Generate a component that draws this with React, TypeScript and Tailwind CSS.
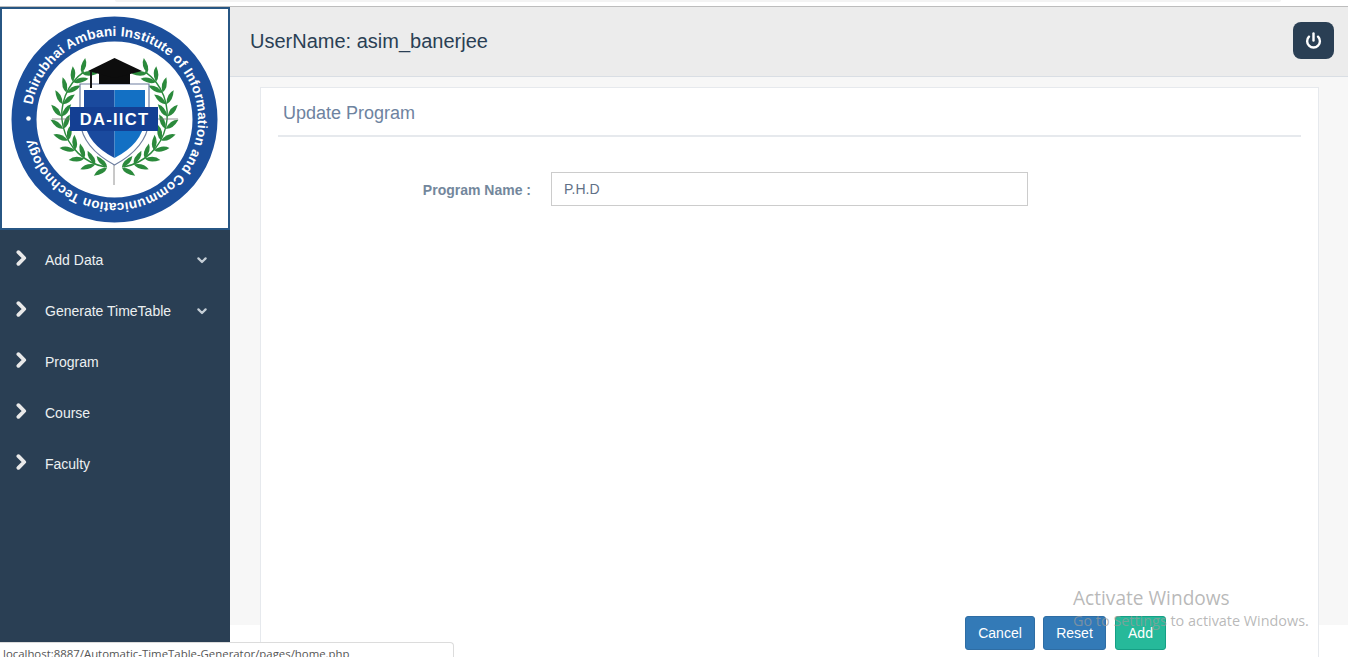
import { Power } from "lucide-react";

const menu = [
  { label: "Add Data", caret: true },
  { label: "Generate TimeTable", caret: true },
  { label: "Program", caret: false },
  { label: "Course", caret: false },
  { label: "Faculty", caret: false },
];

// leaf pairs on one side of the wreath, from the bottom up to the cap
const leaves = Array.from({ length: 11 }, (_, i) => {
  const deg = 82 - i * 13.4;
  const rad = deg * (Math.PI / 180);
  return { x: 53 * Math.cos(rad), y: 53 * Math.sin(rad), rot: deg - 90 };
});

function Branch() {
  return (
    <g>
      <path d="M9 52 A53 53 0 0 0 30.4 -43.4" fill="none" stroke="#2b8a3c" strokeWidth="1.4" />
      {leaves.map((l, i) => (
        <g key={i} transform={`translate(${l.x} ${l.y}) rotate(${l.rot})`} fill="#2b8a3c">
          <path d="M0 0 Q1 -7 12 -10 Q10 -2 0 0 Z" />
          <path d="M0 0 Q1 7 12 10 Q10 2 0 0 Z" />
        </g>
      ))}
    </g>
  );
}

function Logo() {
  return (
    <svg viewBox="0 0 226 219" className="block h-[219px] w-[226px]">
      <g transform="translate(-2 -9)">
        <circle cx="114.5" cy="119.5" r="90.5" fill="none" stroke="#1c4f9c" strokeWidth="25" />
        <path id="seal-ring" d="M32.3 105 A83.5 83.5 0 1 1 32.3 134" fill="none" />
        <text fill="#fff" fontFamily="Liberation Sans, Arial, sans-serif" fontSize="13.5" fontWeight="700">
          <textPath href="#seal-ring" textLength="490" lengthAdjust="spacing">
            Dhirubhai Ambani Institute of Information and Communication Technology
          </textPath>
        </text>
        <circle cx="28.5" cy="118.5" r="2.3" fill="#fff" />

        <g transform="translate(114.5 115)">
          <Branch />
          <g transform="scale(-1 1)">
            <Branch />
          </g>
        </g>
        <path d="M114 165 V185 M156 119 H178 M52 119 H72" stroke="#777" strokeWidth="0.8" />

        <path d="M80 84 H149 V122 Q146 148 114.5 165 Q83 148 80 122 Z" fill="#fff" stroke="#6f7f9f" strokeWidth="1.2" />
        <path d="M84 90 H114.5 V158 Q87 144 84 120 Z" fill="#1a4a9e" />
        <path d="M114.5 90 H145 V120 Q142 144 114.5 158 Z" fill="#1370c4" />
        <rect x="70" y="107" width="88" height="24" fill="#143f93" />
        <text x="114.5" y="125" textAnchor="middle" fill="#fff" fontFamily="Liberation Sans, Arial, sans-serif" fontSize="16.5" fontWeight="700" letterSpacing="1.3">
          DA-IICT
        </text>

        <path d="M99 72 H130 V84 H99 Z" fill="#0d0d0d" />
        <path d="M114.5 58 L142 71 L114.5 78 L88 71 Z" fill="#0d0d0d" />
        <path d="M91 71 V88" stroke="#151515" strokeWidth="2" />
      </g>
    </svg>
  );
}

export default function App() {
  return (
    <div className="relative h-[657px] overflow-hidden bg-white font-['Liberation_Sans',Arial,sans-serif]">
      <div className="h-[7px] border-b border-[#bdbdbd] bg-white">
        <div className="ml-[115px] mr-[67px] h-[2px] rounded-b-md bg-[#f3f3f3]" />
      </div>

      <div className="flex">
        <aside className="h-[636px] w-[230px] shrink-0 bg-[#2a3f54]">
          <div className="h-[223px] border-2 border-[#275683] bg-white">
            <Logo />
          </div>
          <nav className="pt-[5px]">
            {menu.map((item) => (
              <div key={item.label} className="flex h-[51px] items-center pl-[16px] pr-[23px] text-[14px] text-[#ecf0f1]">
                <svg viewBox="0 0 11 16" className="mb-[5px] h-[16px] w-[11px] shrink-0">
                  <path d="M2.4 2.2 L8.2 8 L2.4 13.8" fill="none" stroke="#e9e9e9" strokeWidth="3.8" strokeLinejoin="round" strokeLinecap="round" />
                </svg>
                <span className="ml-[18px] flex-1">{item.label}</span>
                {item.caret && (
                  <svg viewBox="0 0 10 7" className="h-[7px] w-[10px] shrink-0">
                    <path d="M1.4 1.4 L5 5 L8.6 1.4" fill="none" stroke="#c5ced6" strokeWidth="2.2" strokeLinecap="round" strokeLinejoin="round" />
                  </svg>
                )}
              </div>
            ))}
          </nav>
        </aside>

        <main className="min-w-0 flex-1">
          <header className="flex h-[70px] items-center justify-between border-b border-[#d9dee4] bg-[#ececec] pl-[20px] pr-[14px]">
            <h1 className="mt-[-2px] text-[20px] font-normal text-[#2a3f54]">UserName: asim_banerjee</h1>
            <button className="mt-[-3px] flex h-[37px] w-[41px] items-center justify-center rounded-[8px] bg-[#2a3f54] text-white">
              <Power size={17} strokeWidth={3.4} />
            </button>
          </header>

          <div className="h-[548px] bg-[#f7f7f7] pl-[30px] pr-[29px] pt-[10px]">
            <section className="flex h-[580px] flex-col border border-[#e6e9ed] bg-white px-[17px]">
              <div className="border-b-2 border-[#e6e9ed] pb-[11px] pl-[5px] pt-[14px]">
                <h2 className="text-[18px] font-normal leading-[22px] text-[#6e83a0]">Update Program</h2>
              </div>

              <div className="mt-[35px] flex items-center">
                <label className="mt-[2px] w-[253px] text-right text-[14px] font-bold text-[#73879c]">Program Name :</label>
                <input
                  defaultValue="P.H.D"
                  className="ml-[20px] h-[34px] w-[477px] border border-[#cccccc] px-[12px] text-[14px] text-[#5f7187] outline-none"
                />
              </div>

              <div className="mt-[410px] flex justify-end gap-[8px] pr-[135px]">
                <button className="h-[34px] w-[70px] rounded-[3px] border border-[#2e6da4] bg-[#337ab7] text-[14px] text-white">Cancel</button>
                <button className="h-[34px] w-[63px] rounded-[3px] border border-[#2e6da4] bg-[#337ab7] text-[14px] text-white">Reset</button>
                <button className="ml-[1px] h-[34px] w-[51px] rounded-[3px] border border-[#169f85] bg-[#26b99a] text-[14px] text-white">Add</button>
              </div>
            </section>
          </div>
        </main>
      </div>

      {/* windows watermark, sits over the buttons */}
      <div className="pointer-events-none absolute left-[1073px] top-[585px] font-['Open_Sans',sans-serif] text-[#9a9a9a]/70">
        <div className="text-[19.1px] leading-[27px]">Activate Windows</div>
        <div className="text-[14.4px] leading-[18px]">Go to Settings to activate Windows.</div>
      </div>

      {/* browser status bubble */}
      <div className="absolute bottom-0 left-0 h-[15px] w-[454px] overflow-hidden rounded-tr-[4px] border-r border-t border-[#dcdcdc] bg-white pl-[3px] font-['Open_Sans',sans-serif] text-[11.4px] leading-[21px] text-[#555]">
        localhost:8887/Automatic-TimeTable-Generator/pages/home.php
      </div>
    </div>
  );
}
